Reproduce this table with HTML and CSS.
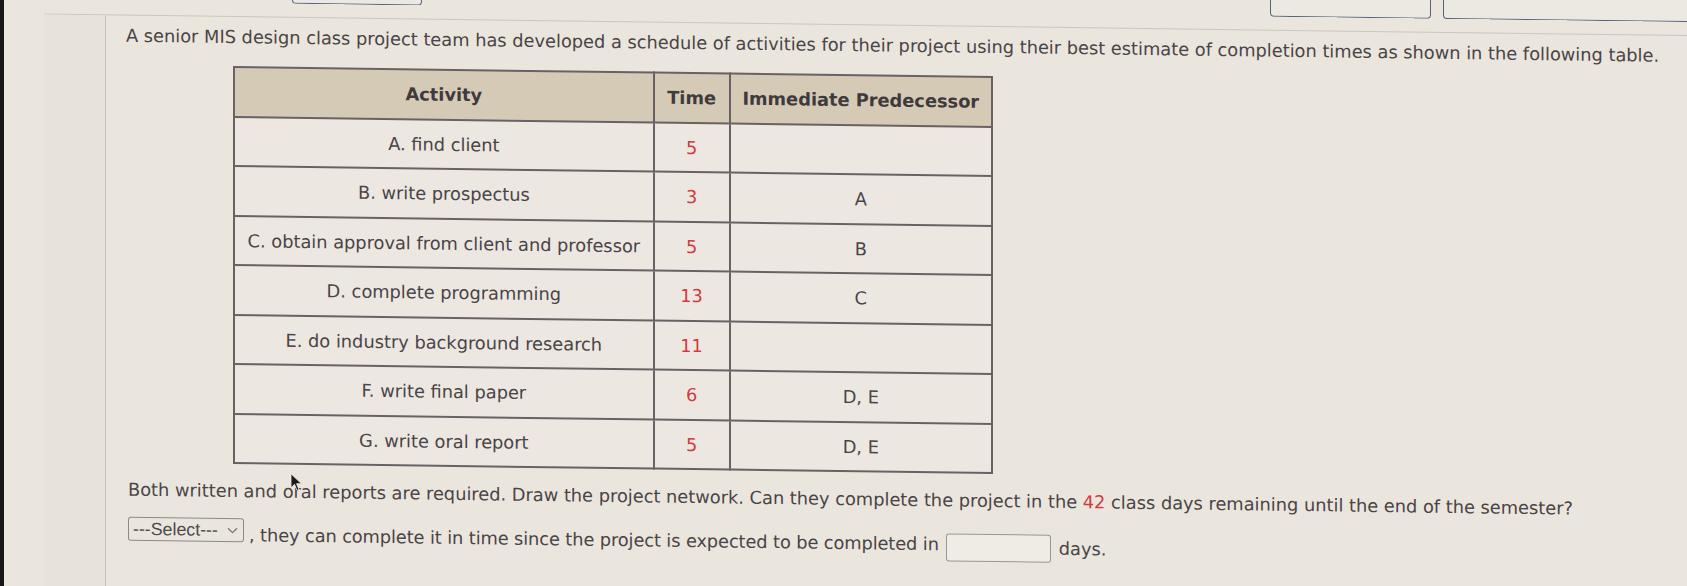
FILE: index.html
```html
<!DOCTYPE html>
<html lang="en">
<head>
<meta charset="utf-8">
<title>Project schedule</title>
<link rel="stylesheet" href="styles.css">
</head>
<body>
<div class="screen">
  <div class="topbar">
    <span class="tab-btn tab-btn-left"></span>
    <span class="spacer"></span>
    <span class="tab-btn tab-btn-mid"></span>
    <span class="tab-btn tab-btn-right"></span>
  </div>
  <div class="panel">
    <div class="gutter"></div>
    <div class="content">
      <p class="intro">A senior MIS design class project team has developed a schedule of activities for their project using their best estimate of completion times as shown in the following table.</p>
      <table class="sched">
        <thead>
          <tr><th class="c-act">Activity</th><th class="c-time">Time</th><th class="c-pred">Immediate Predecessor</th></tr>
        </thead>
        <tbody>
          <tr><td>A. find client</td><td class="num">5</td><td></td></tr>
          <tr><td>B. write prospectus</td><td class="num">3</td><td>A</td></tr>
          <tr><td>C. obtain approval from client and professor</td><td class="num">5</td><td>B</td></tr>
          <tr><td>D. complete programming</td><td class="num">13</td><td>C</td></tr>
          <tr><td>E. do industry background research</td><td class="num">11</td><td></td></tr>
          <tr><td>F. write final paper</td><td class="num">6</td><td>D, E</td></tr>
          <tr><td>G. write oral report</td><td class="num">5</td><td>D, E</td></tr>
        </tbody>
      </table>
      <p class="question">Both written and oral reports are required. Draw the project network. Can they complete the project in the <span class="red">42</span> class days remaining until the end of the semester?</p>
      <div class="answer">
        <span class="select">---Select---<svg class="chev" width="11" height="7" viewBox="0 0 11 7"><path d="M1 1.2 L5.5 5.6 L10 1.2" fill="none" stroke="#7a7577" stroke-width="1.3"/></svg></span>
        <span class="after-select">, they can complete it in time since the project is expected to be completed in</span>
        <input class="days" type="text" aria-label="days">
        <span class="unit">days.</span>
      </div>
    </div>
  </div>
  <svg class="cursor" width="14" height="20" viewBox="0 0 14 20"><path d="M1 1 L1 15 L4.5 11.5 L7 17.5 L9 16.6 L6.6 10.8 L11.5 10.8 Z" fill="#1d1b1c" stroke="#f2efe9" stroke-width="0.8"/></svg>
</div>
</body>
</html>
```
FILE: styles.css
```css
* { box-sizing: border-box; }
html, body { margin: 0; padding: 0; }
body {
  background: #eae6de;
  font-family: "DejaVu Sans", Verdana, sans-serif;
  color: #4a4447;
  width: 1687px;
  height: 586px;
  overflow: hidden;
}
.screen {
  position: relative;
  height: 586px;
  border-left: 4px solid #1a1718;
  background: #eae6de;
  transform: skewY(0.75deg);
  transform-origin: 0 0;
}
.topbar {
  height: 13px;
  display: flex;
  align-items: flex-start;
}
.tab-btn {
  display: block;
  height: 30px;
  margin-top: -30px;
  border: 1.5px solid #56627e;
  border-top: none;
  border-radius: 0 0 4px 4px;
  background: #ece9e3;
}
.tab-btn-left { width: 130px; margin-left: 288px; }
.spacer { flex: 1; }
.tab-btn-mid { width: 161px; margin-right: 12px; }
.tab-btn-right { width: 254px; margin-right: -10px; }
.panel {
  display: flex;
  margin-left: 40px;
  border-top: 1.5px solid #cbc6be;
  height: 573px;
}
.gutter {
  width: 62px;
  border-right: 1.5px solid #c5beb7;
  background: #e7e3db;
}
.content {
  flex: 1;
  padding-left: 20px;
  padding-top: 9px;
}
.intro {
  margin: 0;
  font-size: 17.8px;
  line-height: 22px;
}
.sched {
  margin: 18px 0 0 107px;
  border-collapse: collapse;
  font-size: 17.8px;
  width: 760px;
}
.sched th, .sched td {
  border: 2px solid #6a6165;
  text-align: center;
  height: 49.5px;
  padding: 0 4px;
}
.sched th {
  background: #d5cab6;
  font-weight: bold;
  color: #3f3a3c;
}
.c-act { width: 421px; }
.c-time { width: 76px; }
.c-pred { width: 263px; }
.sched tbody td { background: #ece8e1; }
.num, .red { color: #d23a3f; }
.question {
  margin: 16px 0 0 2px;
  font-size: 17.8px;
  line-height: 22px;
}
.answer {
  margin: 19px 0 0 2px;
  font-size: 17.8px;
  line-height: 22px;
  display: flex;
  align-items: flex-start;
}
.select {
  display: inline-flex;
  align-items: center;
  height: 24px;
  width: 116px;
  margin-top: -3px;
  padding: 0 0 0 4px;
  border: 1px solid #8e8889;
  border-radius: 3px;
  font-family: "Liberation Sans", Arial, sans-serif;
  font-size: 17.8px;
  color: #4e494b;
  white-space: nowrap;
}
.chev { margin-left: 9px; }
.after-select { margin: 3px 0 0 5px; letter-spacing: -0.1px; }
.days {
  width: 105px;
  height: 28px;
  margin: 3px 8px 0 7px;
  border: 1px solid #9b9596;
  border-radius: 3px;
  background: #efece6;
}
.unit { margin-top: 6px; }
.cursor {
  position: absolute;
  left: 286px;
  top: 469px;
}
```
